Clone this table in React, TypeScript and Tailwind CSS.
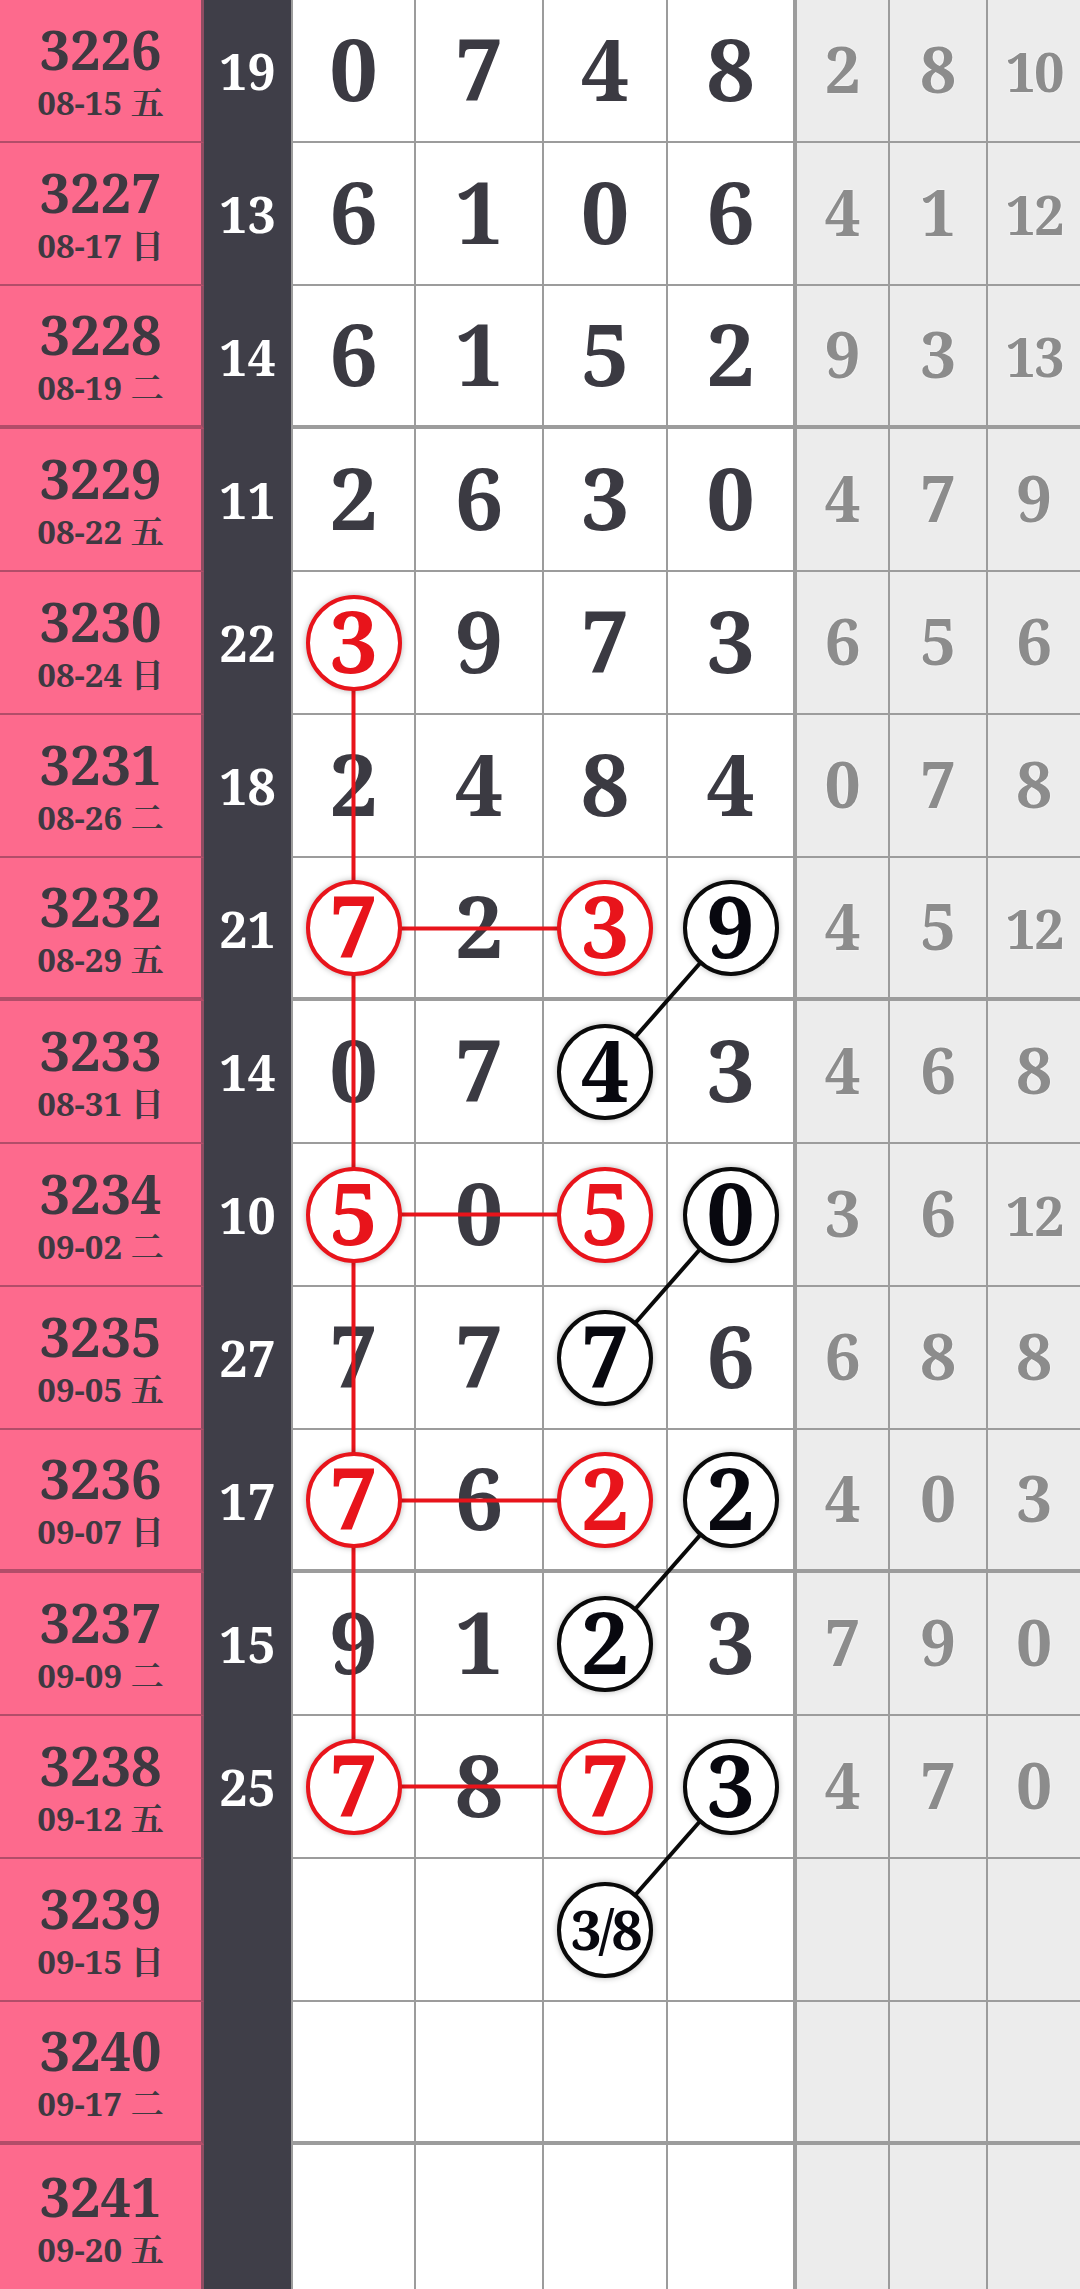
import React from "react";

type Row = {
  id: string;
  date: string;
  wd: string;
  sum: string;
  nums: string[];
  tail: string[];
};

const rows: Row[] = [
  { id: "3226", date: "08-15", wd: "五", sum: "19", nums: ["0", "7", "4", "8"], tail: ["2", "8", "10"] },
  { id: "3227", date: "08-17", wd: "日", sum: "13", nums: ["6", "1", "0", "6"], tail: ["4", "1", "12"] },
  { id: "3228", date: "08-19", wd: "二", sum: "14", nums: ["6", "1", "5", "2"], tail: ["9", "3", "13"] },
  { id: "3229", date: "08-22", wd: "五", sum: "11", nums: ["2", "6", "3", "0"], tail: ["4", "7", "9"] },
  { id: "3230", date: "08-24", wd: "日", sum: "22", nums: ["3", "9", "7", "3"], tail: ["6", "5", "6"] },
  { id: "3231", date: "08-26", wd: "二", sum: "18", nums: ["2", "4", "8", "4"], tail: ["0", "7", "8"] },
  { id: "3232", date: "08-29", wd: "五", sum: "21", nums: ["7", "2", "3", "9"], tail: ["4", "5", "12"] },
  { id: "3233", date: "08-31", wd: "日", sum: "14", nums: ["0", "7", "4", "3"], tail: ["4", "6", "8"] },
  { id: "3234", date: "09-02", wd: "二", sum: "10", nums: ["5", "0", "5", "0"], tail: ["3", "6", "12"] },
  { id: "3235", date: "09-05", wd: "五", sum: "27", nums: ["7", "7", "7", "6"], tail: ["6", "8", "8"] },
  { id: "3236", date: "09-07", wd: "日", sum: "17", nums: ["7", "6", "2", "2"], tail: ["4", "0", "3"] },
  { id: "3237", date: "09-09", wd: "二", sum: "15", nums: ["9", "1", "2", "3"], tail: ["7", "9", "0"] },
  { id: "3238", date: "09-12", wd: "五", sum: "25", nums: ["7", "8", "7", "3"], tail: ["4", "7", "0"] },
  { id: "3239", date: "09-15", wd: "日", sum: "", nums: ["", "", "3/8", ""], tail: ["", "", ""] },
  { id: "3240", date: "09-17", wd: "二", sum: "", nums: ["", "", "", ""], tail: ["", "", ""] },
  { id: "3241", date: "09-20", wd: "五", sum: "", nums: ["", "", "", ""], tail: ["", "", ""] },
];

// r = red ring, b = black ring, keyed by "row-col"
const marks: Record<string, "r" | "b"> = {
  "4-0": "r",
  "6-0": "r",
  "6-2": "r",
  "6-3": "b",
  "7-2": "b",
  "8-0": "r",
  "8-2": "r",
  "8-3": "b",
  "9-2": "b",
  "10-0": "r",
  "10-2": "r",
  "10-3": "b",
  "11-2": "b",
  "12-0": "r",
  "12-2": "r",
  "12-3": "b",
  "13-2": "b",
};

const mainWidths = ["w-[125px] border-l-2", "w-[128px]", "w-[124px]", "w-[129px]"];
const tailWidths = ["w-[93px] border-r-2", "w-[98px] border-r-2", "w-[92px]"];

const RED = "#e8141b";
const cx = [353.5, 0, 605, 730.5];
const cy = (i: number) => 143 * i + 70.5;

function Ring({ value, red }: { value: string; red: boolean }) {
  const small = value.length > 1;
  return (
    <span
      className={`relative z-20 flex h-[96px] w-[96px] items-center justify-center rounded-full border-4 bg-white leading-none shadow-[0_0_6px_rgba(0,0,0,0.3)] ${
        red ? "border-[#e8141b] text-[#e8141b]" : "border-[#0a0a0a] text-[#08080f]"
      } ${small ? "pb-[2px] text-[55px] tracking-[-3px]" : "pb-[6px] text-[86px]"}`}
    >
      {value}
    </span>
  );
}

export default function App() {
  const redRows = [6, 8, 10, 12];
  return (
    <div className="relative w-[1080px] overflow-hidden bg-white font-['Noto_Serif','DejaVu_Serif','Noto_Serif_CJK_SC','Noto_Sans_CJK_SC',serif] font-bold">
      {rows.map((row, i) => {
        const thick = i === 2 || i === 6 || i === 10 || i === 14;
        const last = i === rows.length - 1;
        const bb = last ? "border-b-0" : thick ? "border-b-4" : "border-b-2";
        return (
          <div key={row.id} className={`flex ${last ? "h-[144px]" : "h-[143px]"}`}>
            <div
              className={`flex w-[204px] shrink-0 flex-col items-center justify-center border-r-[3px] border-r-[#8f4d62] bg-[#fd6a8d] ${bb} border-b-[#b24d69] text-[#3e3941]`}
            >
              <span className="text-[54px] leading-none">{row.id}</span>
              <span className="mt-[10px] text-[33px] leading-none">{`${row.date} ${row.wd}`}</span>
            </div>
            <div className="flex w-[87px] shrink-0 items-center justify-center bg-[#3f3e48] pb-[2px] text-[50px] leading-none text-white">
              {row.sum}
            </div>
            {row.nums.map((n, c) => {
              const mark = marks[`${i}-${c}`];
              return (
                <div
                  key={c}
                  className={`flex shrink-0 items-center justify-center border-[#9c9c9c] bg-white ${mainWidths[c]} ${
                    c === 3 ? "border-r-4" : "border-r-2"
                  } ${bb}`}
                >
                  {mark ? (
                    <Ring value={n} red={mark === "r"} />
                  ) : (
                    <span className="pb-[6px] text-[86px] leading-none text-[#3b3a42] [text-shadow:0_0_2px_#fff]">
                      {n}
                    </span>
                  )}
                </div>
              );
            })}
            {row.tail.map((t, c) => (
              <div
                key={c}
                className={`flex shrink-0 items-center justify-center border-[#9c9c9c] bg-[#ececec] ${tailWidths[c]} ${bb}`}
              >
                <span
                  className={`leading-none text-[#8c8c8c] [text-shadow:0_0_2px_#fff] ${
                    t.length > 1 ? "text-[54px] tracking-[-2px]" : "pb-[4px] text-[64px]"
                  }`}
                >
                  {t}
                </span>
              </div>
            ))}
          </div>
        );
      })}

      <svg
        className="pointer-events-none absolute left-0 top-0 z-10"
        width={1080}
        height={2289}
        viewBox="0 0 1080 2289"
      >
        <line x1={cx[0]} y1={cy(4)} x2={cx[0]} y2={cy(12)} stroke={RED} strokeWidth={4} />
        {redRows.map((r) => (
          <line key={`h${r}`} x1={cx[0]} y1={cy(r)} x2={cx[2]} y2={cy(r)} stroke={RED} strokeWidth={4} />
        ))}
        {redRows.map((r) => (
          <line key={`d${r}`} x1={cx[3]} y1={cy(r)} x2={cx[2]} y2={cy(r + 1)} stroke="#0a0a0a" strokeWidth={4} />
        ))}
      </svg>
    </div>
  );
}
